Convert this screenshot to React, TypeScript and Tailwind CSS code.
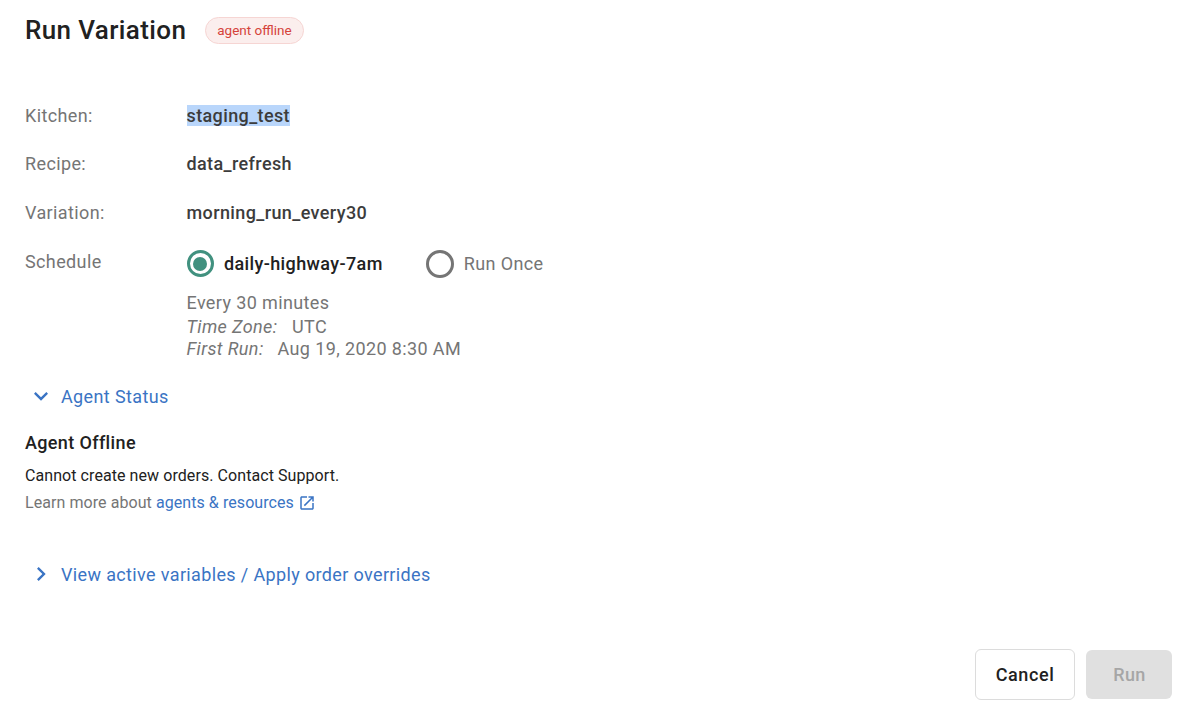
import React from "react";

const ExpandMore = () => (
  <svg viewBox="0 0 24 24" className="h-[28px] w-[28px] fill-current">
    <path d="M16.59 8.59L12 13.17 7.41 8.59 6 10l6 6 6-6z" />
  </svg>
);

const ChevronRight = () => (
  <svg viewBox="0 0 24 24" className="h-[28px] w-[28px] fill-current">
    <path d="M10 6L8.59 7.41 13.17 12l-4.58 4.59L10 18l6-6z" />
  </svg>
);

const OpenInNew = () => (
  <svg viewBox="0 0 24 24" className="ml-[4px] h-[18px] w-[18px] fill-[#3a74c4]">
    <path d="M19 19H5V5h7V3H5c-1.11 0-2 .9-2 2v14c0 1.1.89 2 2 2h14c1.1 0 2-.9 2-2v-7h-2v7zM14 3v2h3.59l-9.83 9.83 1.41 1.41L19 6.41V10h2V3h-7z" />
  </svg>
);

const Row = ({ label, value, selected }: { label: string; value: string; selected?: boolean }) => (
  <div className="flex h-[48.5px] items-center text-[18px] leading-6 tracking-[0.38px]">
    <div className="w-[161.5px] text-[#757575]">{label}</div>
    <div className="font-medium text-[#3c3c3c]">
      {selected ? <span className="bg-[#b9d6fb]">{value}</span> : value}
    </div>
  </div>
);

export default function App() {
  return (
    <div className="relative h-[723px] w-[1200px] overflow-hidden bg-white pl-[25px] font-['Roboto',sans-serif]">
      <div className="flex h-[60px] items-center">
        <h1 className="text-[26px] font-medium tracking-[0.38px] text-[#212121]">Run Variation</h1>
        <span className="ml-[19px] flex h-[27px] items-center rounded-full border border-[#f6d5d3] bg-[#fbeeed] px-[11px] text-[13.5px] text-[#d5433b]">
          agent offline
        </span>
      </div>

      <div className="mt-[31.5px]">
        <Row label="Kitchen:" value="staging_test" selected />
        <Row label="Recipe:" value="data_refresh" />
        <Row label="Variation:" value="morning_run_every30" />
      </div>

      <div className="mt-[12.5px] flex text-[18px] leading-6 tracking-[0.38px]">
        <div className="w-[161.5px] text-[#757575]">Schedule</div>
        <div>
          <div className="flex h-[28px] items-center">
            <span className="flex h-[27px] w-[27px] items-center justify-center rounded-full border-[3px] border-[#41917f]">
              <span className="h-[14px] w-[14px] rounded-full bg-[#41917f]" />
            </span>
            <span className="ml-[10.5px] font-medium text-[#212121]">daily-highway-7am</span>
            <span className="ml-[43px] h-[28px] w-[28px] rounded-full border-[3px] border-[#757575]" />
            <span className="ml-[10px] text-[#757575]">Run Once</span>
          </div>
          <div className="mt-[13px] text-[#757575]">
            <div>Every 30 minutes</div>
            <div className="flex">
              <i className="w-[105.5px]">Time Zone:</i>
              <span>UTC</span>
            </div>
            <div className="flex leading-[20px]">
              <i className="w-[91px]">First Run:</i>
              <span>Aug 19, 2020 8:30 AM</span>
            </div>
          </div>
        </div>
      </div>

      <div className="mt-[25.5px] flex h-[24px] items-center text-[18px] tracking-[0.38px] text-[#3a74c4]">
        <span className="ml-[2px]"><ExpandMore /></span>
        <span className="ml-[6px]">Agent Status</span>
      </div>

      <div className="mt-[23px] text-[18px] font-medium leading-6 tracking-[0.36px] text-[#212121]">Agent Offline</div>
      <div className="mt-[11px] text-[16px] leading-5 tracking-[0.07px] text-[#212121]">Cannot create new orders. Contact Support.</div>
      <div className="mt-[7px] flex items-center text-[16px] leading-5 tracking-[0.07px] text-[#757575]">
        Learn more about
        <span className="ml-[4px] text-[#3a74c4]">agents &amp; resources</span>
        <OpenInNew />
      </div>

      <div className="mt-[49px] flex h-[24px] items-center text-[18px] tracking-[0.36px] text-[#3a74c4]">
        <span className="ml-[2px]"><ChevronRight /></span>
        <span className="ml-[6px]">View active variables / Apply order overrides</span>
      </div>

      <div className="absolute right-[28px] top-[649px] flex gap-[11px]">
        <button className="h-[51px] w-[100px] rounded-[6px] border border-[#dcdcdc] bg-white text-[18px] font-medium tracking-[0.6px] text-[#212121]">
          Cancel
        </button>
        <button className="mt-[1px] h-[49px] w-[86px] rounded-[6px] bg-[#e0e0e0] pl-[1px] text-[18px] font-medium tracking-[0.4px] text-[#a6a6a6]">
          Run
        </button>
      </div>
    </div>
  );
}
